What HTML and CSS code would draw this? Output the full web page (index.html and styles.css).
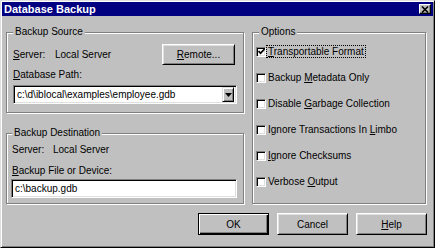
FILE: index.html
```html
<!DOCTYPE html>
<html lang="en">
<head>
    <meta charset="UTF-8">
    <title>Database Backup</title>
    <link rel="stylesheet" href="styles.css">
</head>
<body>
    <div class="window">
        <div class="titlebar">
            <span class="title">Database Backup</span>
            <span class="close">
                <svg width="8" height="7" viewBox="0 0 8 7"><path d="M1 0.5 L7 6.5 M7 0.5 L1 6.5" stroke="#000" stroke-width="1.6"/></svg>
            </span>
        </div>

        <div class="content">
            <div class="main">
                <div class="left">
                    <fieldset class="group source">
                        <legend>Backup Source</legend>
                        <div class="server-row">
                            <span class="server-label"><u>S</u>erver:</span>
                            <span>Local Server</span>
                            <button class="btn remote"><u>R</u>emote...</button>
                        </div>
                        <div class="field-label"><u>D</u>atabase Path:</div>
                        <div class="combo">
                            <span class="combo-text">c:\d\iblocal\examples\employee.gdb</span>
                            <span class="combo-arrow">
                                <svg width="7" height="4" viewBox="0 0 7 4"><path d="M0 0 H7 L3.5 4 Z" fill="#000"/></svg>
                            </span>
                        </div>
                    </fieldset>

                    <fieldset class="group dest">
                        <legend>Backup Destination</legend>
                        <div class="server-row plain">
                            <span class="server-label">Server:</span>
                            <span>Local Server</span>
                        </div>
                        <div class="field-label"><u>B</u>ackup File or Device:</div>
                        <div class="textbox">c:\backup.gdb</div>
                    </fieldset>
                </div>

                <fieldset class="group options">
                    <legend>Options</legend>
                    <div class="check">
                        <span class="box">
                            <svg width="7" height="7" viewBox="0 0 7 7"><path d="M0.5 3 L2.6 5.2 L6.6 1" fill="none" stroke="#000" stroke-width="1.7"/></svg>
                        </span>
                        <span class="check-text focus"><u>T</u>ransportable Format</span>
                    </div>
                    <div class="check">
                        <span class="box"></span>
                        <span class="check-text">Backup <u>M</u>etadata Only</span>
                    </div>
                    <div class="check">
                        <span class="box"></span>
                        <span class="check-text">Disable <u>G</u>arbage Collection</span>
                    </div>
                    <div class="check">
                        <span class="box"></span>
                        <span class="check-text">Ignore Transactions In <u>L</u>imbo</span>
                    </div>
                    <div class="check">
                        <span class="box"></span>
                        <span class="check-text"><u>I</u>gnore Checksums</span>
                    </div>
                    <div class="check">
                        <span class="box"></span>
                        <span class="check-text">Verbose <u>O</u>utput</span>
                    </div>
                </fieldset>
            </div>

            <div class="buttons">
                <button class="btn default">OK</button>
                <button class="btn">Cancel</button>
                <button class="btn"><u>H</u>elp</button>
            </div>
        </div>
    </div>
</body>
</html>
```

FILE: styles.css
```css
body {
    margin: 0;
    background: #c0c0c0;
    font-family: "Liberation Sans", Arial, sans-serif;
    font-size: 10px;
    color: #000;
}
.window {
    width: 435px;
    height: 248px;
    box-sizing: border-box;
    background: #c0c0c0;
    border: 1px solid;
    border-color: #dfdfdf #000 #000 #dfdfdf;
    box-shadow: inset 1px 1px 0 #fff, inset -1px -1px 0 #808080;
    padding: 1px;
}
.titlebar {
    height: 14px;
    background: #000080;
    color: #fff;
    display: flex;
    align-items: center;
    justify-content: space-between;
    padding: 0 2px;
}
.title {
    font-weight: bold;
    font-size: 11px;
}
.close {
    width: 12px;
    height: 10px;
    box-sizing: border-box;
    background: #c0c0c0;
    border: 1px solid;
    border-color: #fff #000 #000 #fff;
    box-shadow: inset -1px -1px 0 #808080;
    display: flex;
    align-items: center;
    justify-content: center;
}
.close svg { display: block; }

.content { padding: 10px 6px 0 4px; }
.main {
    display: flex;
    gap: 8px;
}
.left {
    width: 238px;
    display: flex;
    flex-direction: column;
}

/* etched group boxes */
.group {
    margin: 0;
    padding: 0 6px;
    min-width: 0;
    box-sizing: border-box;
    border: 1px solid #808080;
    box-shadow: 1px 1px 0 #fff, inset 1px 1px 0 #fff;
}
.group legend {
    padding: 0 2px;
    line-height: 12px;
    background: #c0c0c0;
}
.source { height: 87px; }
.dest {
    height: 77px;
    margin-top: 14px;
    padding: 0 6px 0 5px;
}
.options {
    width: 174px;
    height: 178px;
    padding: 7px 3px 0;
    display: flex;
    flex-direction: column;
    gap: 13px;
}
.options legend { margin-left: 3px; }

.server-row {
    display: flex;
    align-items: center;
    height: 21px;
    margin-top: 6px;
}
.server-row.plain {
    height: 12px;
    margin-top: 4px;
}
.server-label { width: 42px; }
.plain .server-label { width: 41px; }
.field-label {
    line-height: 12px;
    margin-top: 4px;
}
.dest .field-label { margin-top: 10px; }

.btn {
    font: inherit;
    color: #000;
    width: 71px;
    height: 22px;
    padding: 0;
    background: #c0c0c0;
    border: 1px solid;
    border-color: #fff #000 #000 #fff;
    box-shadow: inset 1px 1px 0 #dfdfdf, inset -1px -1px 0 #808080;
}
.btn.remote {
    width: 73px;
    height: 21px;
    margin-left: auto;
    margin-right: 2px;
}
.btn.default {
    border-color: #000;
    box-shadow: inset 1px 1px 0 #fff, inset -1px -1px 0 #000, inset -2px -2px 0 #808080;
}

/* sunken fields */
.combo, .textbox {
    height: 19px;
    box-sizing: border-box;
    background: #fff;
    border: 1px solid;
    border-color: #808080 #fff #fff #808080;
    box-shadow: inset 1px 1px 0 #000, inset -1px -1px 0 #dfdfdf;
}
.combo {
    margin-top: 4px;
    padding: 1px;
    display: flex;
    align-items: center;
}
.combo-text {
    flex: 1;
    margin-left: 2px;
    white-space: nowrap;
}
.combo-arrow {
    width: 12px;
    height: 15px;
    margin-right: 1px;
    box-sizing: border-box;
    background: #c0c0c0;
    border: 1px solid;
    border-color: #dfdfdf #000 #000 #dfdfdf;
    box-shadow: inset 1px 1px 0 #fff, inset -1px -1px 0 #808080;
    display: flex;
    align-items: center;
    justify-content: center;
}
.combo-arrow svg { display: block; }
.textbox {
    margin: 2px 0 0 -1px;
    width: 226px;
    padding: 0 3px;
    line-height: 17px;
}

/* checkboxes */
.check {
    display: flex;
    align-items: center;
    height: 13px;
}
.box {
    width: 10px;
    height: 10px;
    box-sizing: border-box;
    background: #fff;
    border: 1px solid;
    border-color: #808080 #fff #fff #808080;
    box-shadow: inset 1px 1px 0 #000, inset -1px -1px 0 #dfdfdf;
    display: flex;
    align-items: center;
    justify-content: center;
}
.box svg { display: block; }
.check-text {
    line-height: 11px;
    padding: 0 1px;
    border: 1px dotted transparent;
    white-space: nowrap;
}
.check-text.focus { border-color: #000; }

.buttons {
    display: flex;
    gap: 8px;
    padding-left: 192px;
    margin-top: 9px;
}
```
